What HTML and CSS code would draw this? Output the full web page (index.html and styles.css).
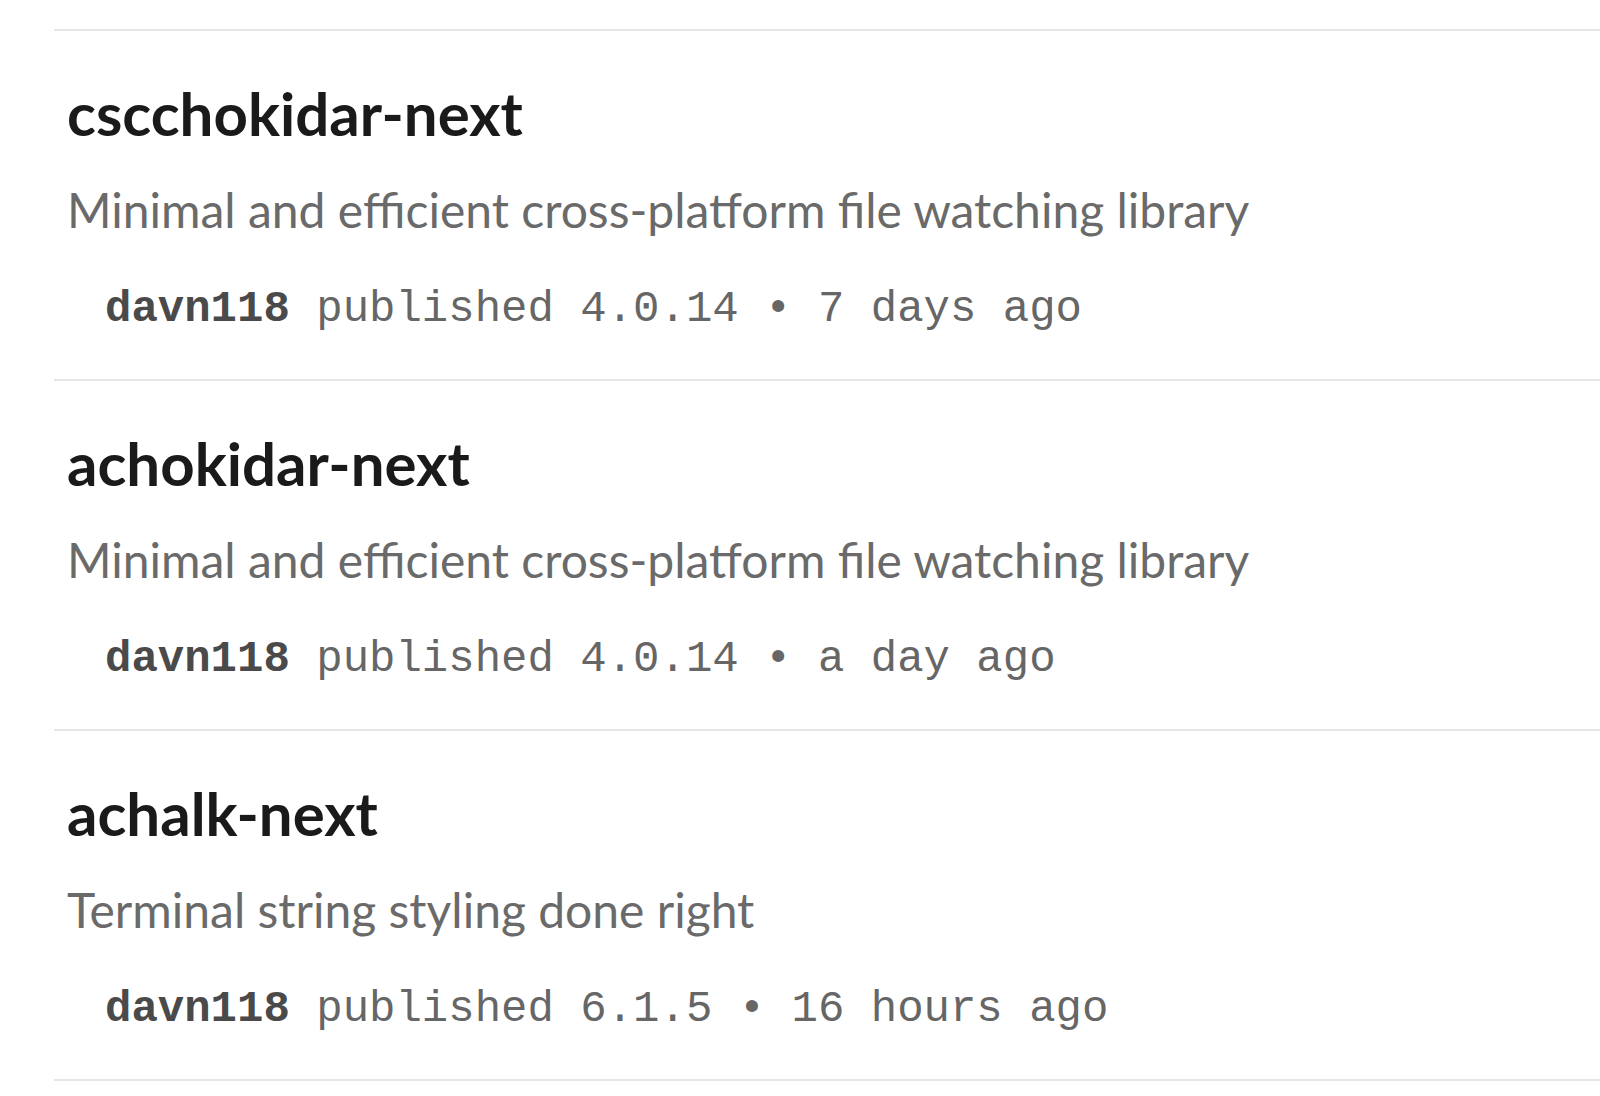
FILE: index.html
```html
<!DOCTYPE html>
<html lang="en">
<head>
    <meta charset="UTF-8">
    <meta name="viewport" content="width=device-width, initial-scale=1.0">
    <link rel="stylesheet" href="styles.css">
    <title>Search results</title>
</head>
<body>
    <section class="results">
        <div class="package">
            <h3 class="package-name">cscchokidar-next</h3>
            <p class="package-desc">Minimal and efficient cross-platform file watching library</p>
            <div class="package-meta"><span class="publisher">davn118</span> published 4.0.14 • 7 days ago</div>
        </div>
        <div class="package">
            <h3 class="package-name">achokidar-next</h3>
            <p class="package-desc">Minimal and efficient cross-platform file watching library</p>
            <div class="package-meta"><span class="publisher">davn118</span> published 4.0.14 • a day ago</div>
        </div>
        <div class="package">
            <h3 class="package-name">achalk-next</h3>
            <p class="package-desc">Terminal string styling done right</p>
            <div class="package-meta"><span class="publisher">davn118</span> published 6.1.5 • 16 hours ago</div>
        </div>
    </section>
</body>
</html>
```

FILE: styles.css
```css
body {
    margin: 0;
    padding: 0;
    background-color: #fff;
    font-family: Lato, "Open Sans", sans-serif;
}

.results {
    margin: 29px 0 0 54px;
    border-top: 2px solid #e6e6e6;
}

.package {
    padding: 52px 0 48px 13px;
    border-bottom: 2px solid #e6e6e6;
}

.package-name {
    margin: 0;
    font-size: 60px;
    line-height: 1;
    font-weight: 700;
    color: #1a1a1a;
}

.package-desc {
    margin: 43px 0 0;
    font-size: 48px;
    line-height: 1;
    color: #6a6a6a;
}

.package-meta {
    margin-top: 53px;
    padding-left: 38px;
    font-family: "Liberation Mono", monospace;
    font-size: 44px;
    line-height: 1;
    color: #666;
}

.publisher {
    font-weight: 700;
    color: #4a4a4a;
}
```
